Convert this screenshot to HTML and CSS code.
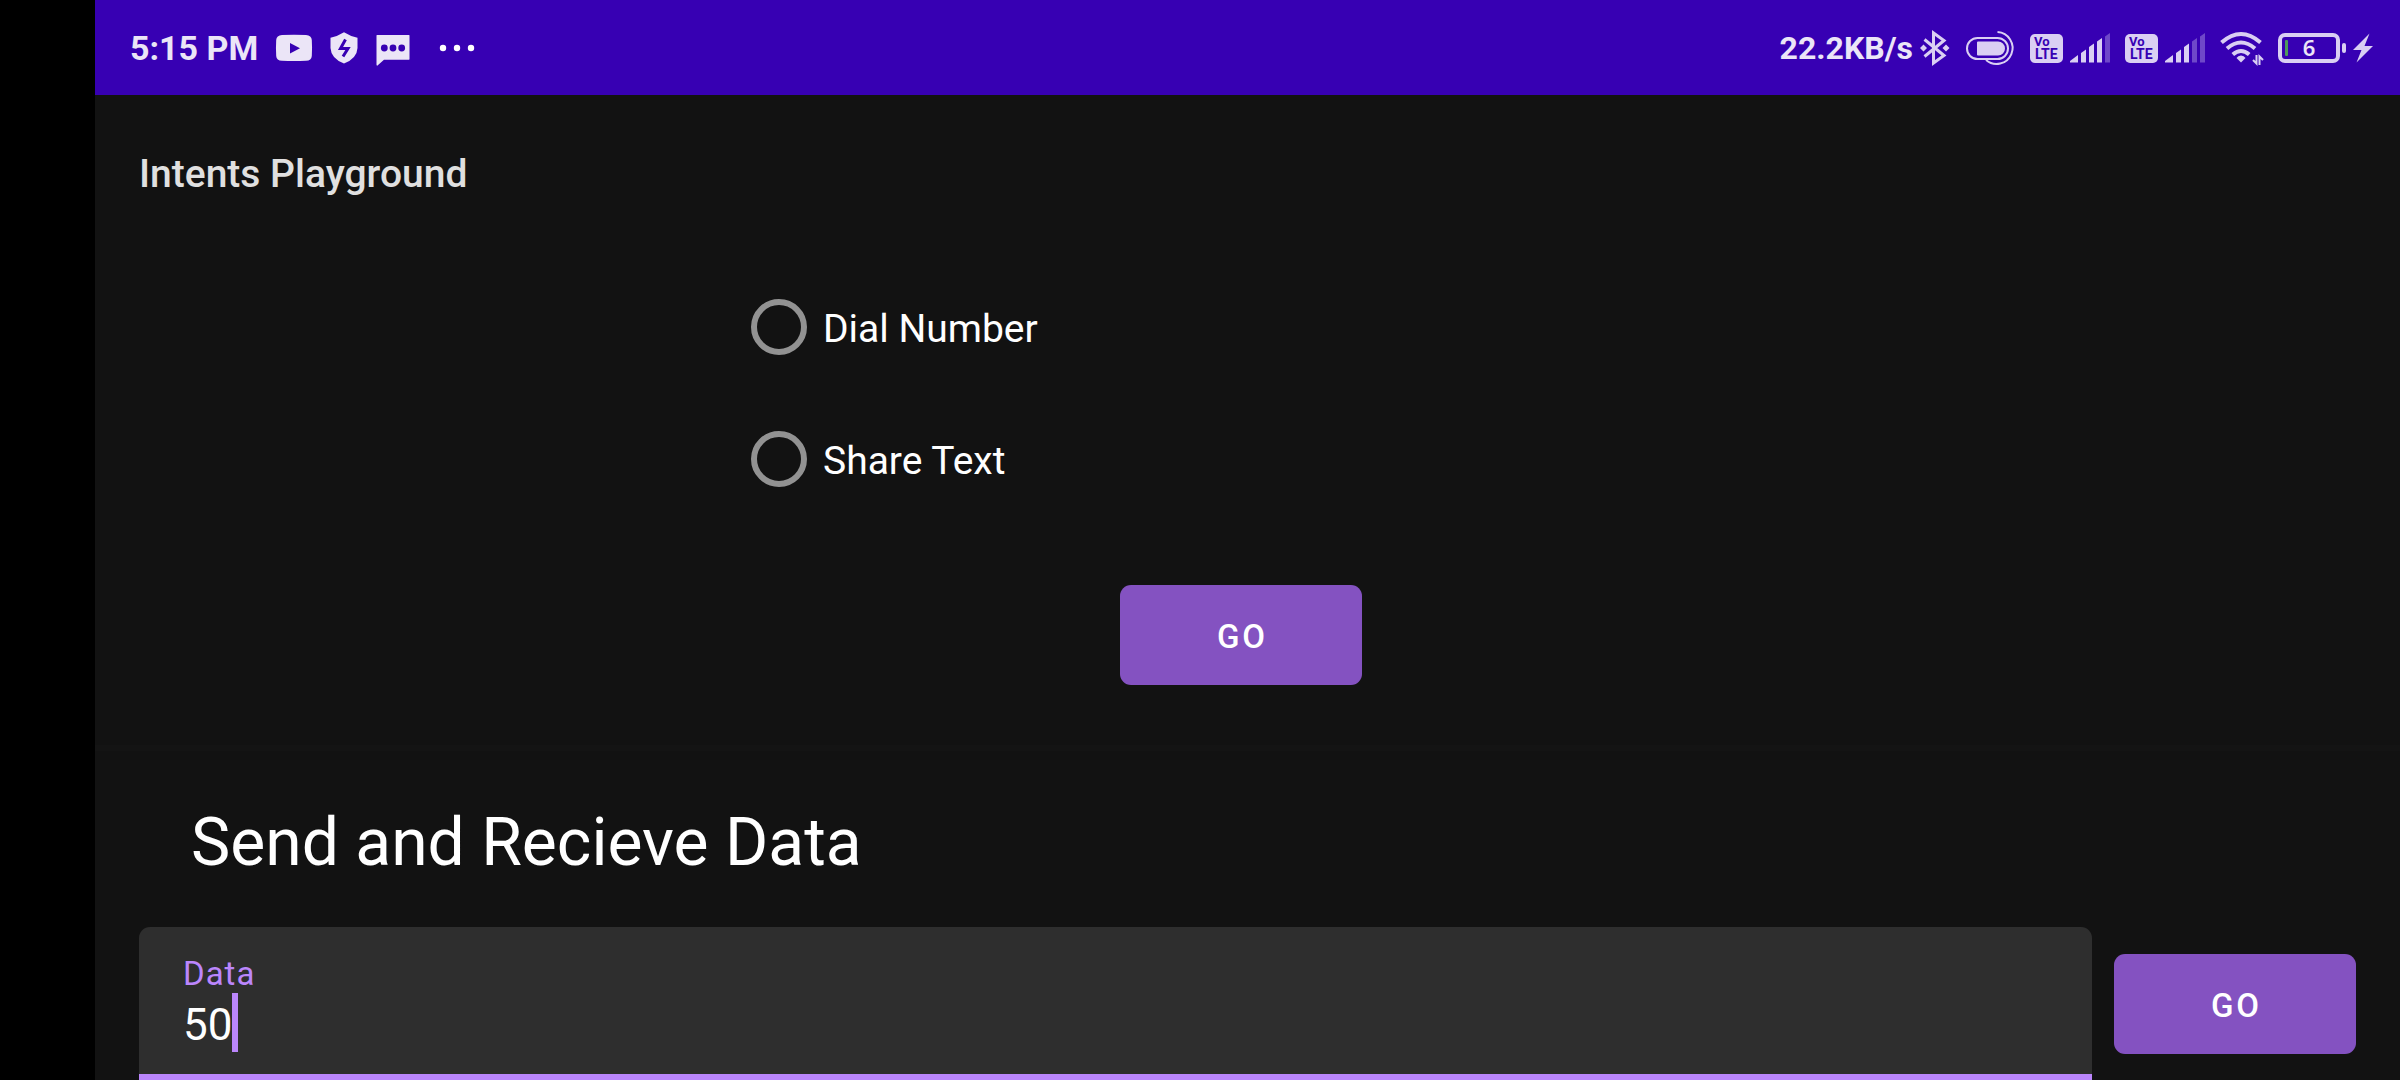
FILE: index.html
```html
<!DOCTYPE html>
<html lang="en">
<head>
<meta charset="utf-8">
<meta name="viewport" content="width=device-width, initial-scale=1">
<title>Intents Playground</title>
<link rel="stylesheet" href="styles.css">
</head>
<body>
<div class="screen">
  <header class="status-bar">
    <div class="status-left">
      <span class="status-text">5:15 PM</span>
      <svg class="icon" width="36" height="34" viewBox="0 0 36 34" aria-hidden="true">
        <path fill-rule="evenodd" d="M6 4Q18 3.4 30 4Q35.500 4.300 35.800 9Q36.300 17 35.800 25Q35.500 29.700 30 29.800Q18 30.200 6 29.800Q.5 29.700.2 25Q-.3 17 .2 9Q.5 4.300 6 4ZM14 12V22.500L24 17.200Z"/>
      </svg>
      <svg class="icon" width="28" height="34" viewBox="0 0 28 34" aria-hidden="true">
        <path d="M14 1.200Q20 5 27.500 6.800V17Q27 27.500 14 32.500Q1 27.500.5 17V6.800Q8 5 14 1.200Z"/>
        <path class="cut-line" d="M15.500 8.500L10.500 17.500H18L13 25.500"/>
      </svg>
      <svg class="icon" width="34" height="34" viewBox="0 0 34 34" aria-hidden="true">
        <path d="M1 4H33Q33.500 4 33.500 4.500V28Q33.500 28.800 33 28.800H8L1.500 34.500Q.5 35 .5 33.500V4.500Q.5 4 1 4Z"/>
        <g class="cut"><circle cx="8.300" cy="17" r="3.400"/><circle cx="17" cy="17" r="3.400"/><circle cx="25.700" cy="17" r="3.400"/></g>
      </svg>
      <svg class="icon more" width="58" height="34" viewBox="0 0 58 34" aria-hidden="true">
        <circle cx="15" cy="17" r="3.200"/><circle cx="29" cy="17" r="3.200"/><circle cx="43" cy="17" r="3.200"/>
      </svg>
    </div>
    <div class="status-right">
      <div class="group">
        <span class="status-text">22.2KB/s</span>
        <svg class="icon-line" width="30" height="34" viewBox="0 0 30 34" aria-hidden="true">
          <path stroke-width="3" d="M4.500 8.500L24 24.500L13.500 32V2L24 9.500L4.500 25.500"/>
          <path class="solid" d="M3.500 13.500L7 17L3.500 20.500L0 17ZM26 13.500L29.500 17L26 20.500L22.500 17Z"/>
        </svg>
      </div>
      <svg class="icon-line" width="50" height="36" viewBox="0 0 50 36" aria-hidden="true">
        <rect x="2" y="8" width="41" height="21" rx="10.500" stroke-width="2"/>
        <path class="solid" d="M13 11.500H33A7 7 0 0 1 33 25.500H13Q12 25.500 12 24.500V12.500Q12 11.500 13 11.500Z"/>
        <path stroke-width="2" d="M32.500 2A16 16 0 1 1 21 30"/>
      </svg>
      <div class="group">
        <svg class="icon dim" width="33" height="30" viewBox="0 0 33 30" aria-hidden="true">
          <rect width="33" height="29" y="1" rx="5"/>
          <text class="volte"><tspan class="vo" x="4" y="13">Vo</tspan><tspan x="5" y="26">LTE</tspan></text>
        </svg>
        <svg class="icon dim" width="40" height="30" viewBox="0 0 40 30" aria-hidden="true">
          <path d="M0 29.500V28L8 22V29.500ZM11 20L16 16.500V29.500H11ZM19 14L24 10.500V29.500H19ZM27 8.500L32 5V29.500H27Z"/>
          <path class="faint" d="M35 3.500L40 0V29.500H35Z"/>
        </svg>
      </div>
      <div class="group">
        <svg class="icon dim" width="33" height="30" viewBox="0 0 33 30" aria-hidden="true">
          <rect width="33" height="29" y="1" rx="5"/>
          <text class="volte"><tspan class="vo" x="4" y="13">Vo</tspan><tspan x="5" y="26">LTE</tspan></text>
        </svg>
        <svg class="icon dim" width="40" height="30" viewBox="0 0 40 30" aria-hidden="true">
          <path d="M0 29.500V28L8 22V29.500ZM11 20L16 16.500V29.500H11ZM19 14L24 10.500V29.500H19Z"/>
          <path class="faint" d="M27 8.500L32 5V29.500H27ZM35 3.500L40 0V29.500H35Z"/>
        </svg>
      </div>
      <svg class="icon-line" width="43" height="34" viewBox="0 0 43 34" aria-hidden="true">
        <path stroke-width="4" d="M1.500 11.500Q21 -5.500 40.500 11.500M7 17.500Q21 5.500 35 17.500M12.800 23.500Q21 16.500 29.200 23.500"/>
        <path class="solid" d="M21 24.500Q24 24.500 25.500 27L21 31.500L16.500 27Q18 24.500 21 24.500Z"/>
        <path stroke-width="2" d="M36.500 24V32.500L33 29M39.500 34V25.500L43 29"/>
      </svg>
      <div class="group">
        <svg class="icon-line" width="68" height="30" viewBox="0 0 68 30" aria-hidden="true">
          <rect x="2" y="2" width="58" height="26" rx="5" stroke-width="4"/>
          <rect class="solid" x="64" y="10" width="4" height="10" rx="2"/>
          <rect class="charge" x="7" y="7" width="3" height="16" rx="1"/>
          <text class="level" x="31" y="23" text-anchor="middle">6</text>
        </svg>
        <svg class="icon dim" width="20" height="30" viewBox="0 0 20 30" aria-hidden="true">
          <path d="M16.500.5L0 17H8.500L3.500 29.500L20 13H11.500Z"/>
        </svg>
      </div>
    </div>
  </header>

  <main class="app">
    <h1 class="app-title">Intents Playground</h1>
    <form class="intents">
      <div class="choices" role="radiogroup" aria-label="Intent">
        <label class="choice"><input class="radio" type="radio" name="intent" value="dial"><span class="choice-text">Dial Number</span></label>
        <label class="choice"><input class="radio" type="radio" name="intent" value="share"><span class="choice-text">Share Text</span></label>
      </div>
      <button class="button" type="button">GO</button>
    </form>
    <hr class="divider">
    <form class="send">
      <h2 class="send-title">Send and Recieve Data</h2>
      <div class="send-row">
        <div class="field">
          <label class="field-label" for="data">Data</label>
          <div class="field-value">
            <input class="field-input" id="data" type="text" value="50">
            <span class="cursor"></span>
          </div>
        </div>
        <button class="button" type="button">GO</button>
      </div>
    </form>
  </main>
</div>
</body>
</html>
```

FILE: styles.css
```css
* {
  box-sizing: border-box;
}

body {
  margin: 0;
  background: #000;
  color: #fff;
  font-family: Roboto, "Liberation Sans", sans-serif;
}

/* The black strip on the left is the camera cutout. */
.screen {
  min-height: 100vh;
  margin-left: 95px;
  background: #121212;
}

.status-bar {
  display: flex;
  justify-content: space-between;
  align-items: center;
  height: 95px;
  padding: 0 27px 0 35px;
  background: #3700b3;
}

.status-left,
.status-right,
.group {
  display: flex;
  align-items: center;
}

.status-left {
  gap: 18px;
}

.status-right {
  gap: 15px;
}

.group {
  gap: 7px;
}

.status-text {
  padding-top: 1px;
  color: #ebe5f7;
  font-size: 32px;
  font-weight: 700;
  line-height: 40px;
}

.status-left .status-text {
  font-size: 34px;
}

.icon {
  fill: #ebe5f7;
  overflow: visible;
}

.icon.dim {
  fill: #dacff3;
}

.icon.more {
  fill: #fff;
}

.icon-line {
  fill: none;
  stroke: #dacff3;
  overflow: visible;
}

.icon-line .solid {
  fill: #dacff3;
  stroke: none;
}

.icon-line .charge {
  fill: #4f9a5a;
  stroke: none;
}

.cut,
.volte {
  fill: #3700b3;
}

.cut-line {
  fill: none;
  stroke: #3700b3;
  stroke-width: 3;
}

.faint {
  opacity: 0.35;
}

.volte {
  font: 700 14px Roboto, sans-serif;
}

.vo {
  font-size: 13px;
}

.level {
  fill: #ebe5f7;
  stroke: none;
  font: 600 22px "Noto Sans", sans-serif;
}

.app-title {
  margin: 0;
  padding: 2px 44px 0;
  color: #e0e0e0;
  font-size: 39px;
  font-weight: 500;
  line-height: 154px;
}

.intents {
  display: flex;
  flex-direction: column;
  align-items: center;
  gap: 60px;
  padding: 10px 13px 60px 0;
}

.choices {
  width: 980px;
  max-width: 100%;
}

.choice {
  display: flex;
  align-items: center;
  gap: 16px;
  height: 132px;
  font-size: 39px;
}

.choice-text {
  padding-top: 3px;
}

.radio {
  appearance: none;
  width: 56px;
  height: 56px;
  margin: 0;
  border: 6px solid #929292;
  border-radius: 50%;
}

.radio:checked {
  border-color: #bb86fc;
  background: radial-gradient(#bb86fc 50%, transparent 52%);
}

.button {
  flex: none;
  width: 242px;
  height: 100px;
  padding: 3px 0 0 3px;
  border: 0;
  border-radius: 11px;
  background: #8452c1;
  color: #fff;
  font-family: inherit;
  font-size: 33px;
  font-weight: 500;
  letter-spacing: 3px;
}

.divider {
  height: 6px;
  margin: 0;
  border: 0;
  background: #141414;
}

.send {
  padding: 53px 44px 0;
}

.send-title {
  margin: 0 0 45px;
  padding: 0 52px;
  font-size: 66px;
  font-weight: 400;
  line-height: 78px;
}

.send-row {
  display: flex;
  align-items: center;
  gap: 22px;
}

.field {
  flex: 1;
  height: 153px;
  padding: 26px 44px 0;
  border-bottom: 6px solid #bb86fc;
  border-radius: 11px 11px 0 0;
  background: #2e2e2e;
}

.field-label {
  display: block;
  padding-top: 2px;
  color: #bb86fc;
  font-size: 33px;
  letter-spacing: 1px;
  line-height: 38px;
}

.field-value {
  position: relative;
  font-size: 44px;
}

.field-input {
  display: block;
  width: 100%;
  height: 60px;
  padding: 3px 0 0;
  border: 0;
  outline: 0;
  background: none;
  color: #fff;
  caret-color: transparent;
  font: inherit;
}

.cursor {
  position: absolute;
  top: 0;
  left: 2ch;
  width: 6px;
  height: 59px;
  background: #bb86fc;
}
```
